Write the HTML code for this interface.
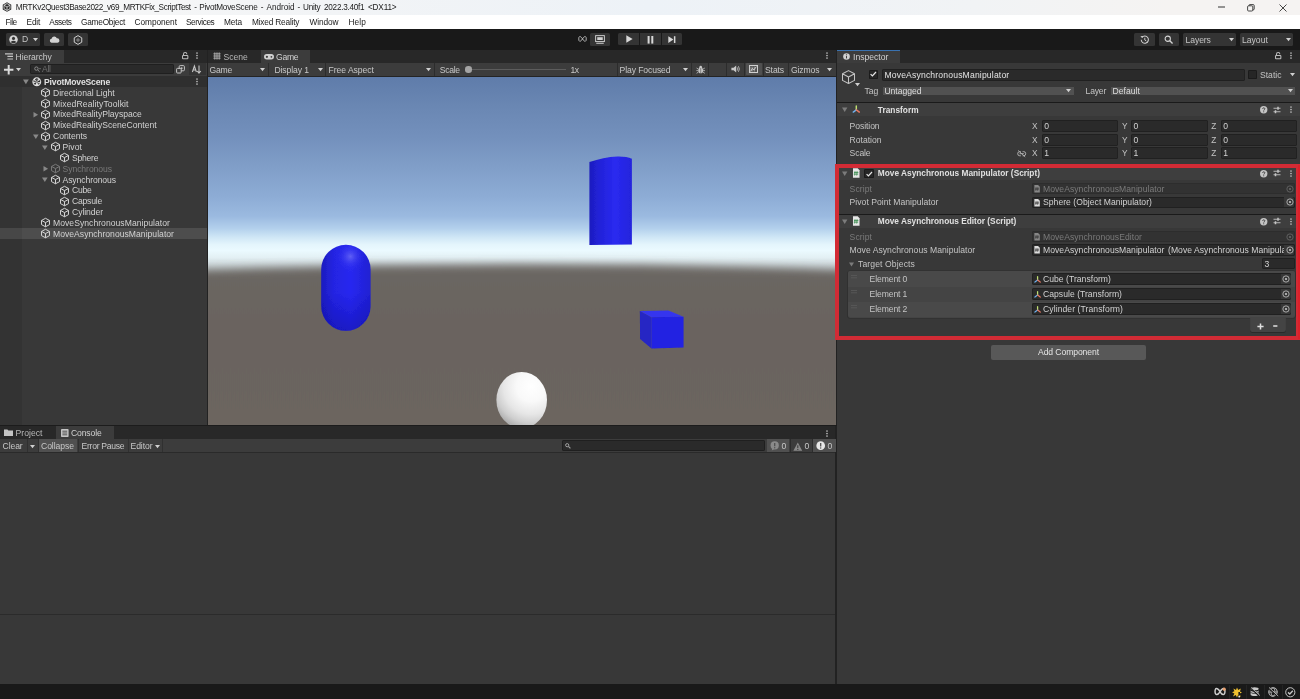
<!DOCTYPE html>
<html lang="en"><head><meta charset="utf-8"><title>Unity - PivotMoveScene</title>
<style>
html,body{margin:0;padding:0;background:#383838;}
body{width:1300px;height:699px;position:relative;overflow:hidden;font-family:"Liberation Sans",sans-serif;}
#root{position:absolute;left:0;top:0;width:1300px;height:699px;overflow:hidden;}
#root div,#root svg,#root span{position:absolute;box-sizing:content-box;}
#root svg{overflow:visible;}
.t{white-space:pre;line-height:12px;height:12px;}
#root{opacity:0.999;}
</style></head><body><div id="root">
<div style="left:0px;top:0px;width:1300px;height:14.8px;background:linear-gradient(90deg,#f8f8f8 0%,#f2f4f6 25%,#edf2f7 50%,#f1f3f5 75%,#f5f3f2 90%);"></div>
<div style="left:0px;top:14.8px;width:1300px;height:14.2px;background:#ffffff;"></div>
<svg style="left:1.8px;top:2.1px;" width="10" height="10" viewBox="0 0 16 16"><path d="M8 0.3 L14.8 4.2 V11.8 L8 15.7 L1.2 11.8 V4.2 Z" fill="#2b2b2b"/><path d="M8 2.5 L12.8 5.2 V10.8 L8 13.5 L3.2 10.8 V5.2 Z" fill="none" stroke="#e8e8e8" stroke-width="1.2"/><path d="M3.2 5.2 L8 8 L12.8 5.2 M8 8 V13.5" stroke="#e8e8e8" stroke-width="1.2" fill="none"/></svg>
<span id="t1" class="t" style="left:15.8px;top:1.70px;color:#1a1a1a;font-size:8.2px;letter-spacing:-0.393px;">MRTKv2Quest3Base2022_v69_MRTKFix_ScriptTest</span>
<span id="t2" class="t" style="left:194.2px;top:1.70px;color:#1a1a1a;font-size:8.2px;">-</span>
<span id="t3" class="t" style="left:199.2px;top:1.70px;color:#1a1a1a;font-size:8.2px;letter-spacing:-0.225px;">PivotMoveScene</span>
<span id="t4" class="t" style="left:260.8px;top:1.70px;color:#1a1a1a;font-size:8.2px;">-</span>
<span id="t5" class="t" style="left:266.5px;top:1.70px;color:#1a1a1a;font-size:8.2px;letter-spacing:-0.033px;">Android</span>
<span id="t6" class="t" style="left:297.6px;top:1.70px;color:#1a1a1a;font-size:8.2px;">-</span>
<span id="t7" class="t" style="left:303px;top:1.70px;color:#1a1a1a;font-size:8.2px;letter-spacing:-0.240px;">Unity</span>
<span id="t8" class="t" style="left:324px;top:1.70px;color:#1a1a1a;font-size:8.2px;letter-spacing:-0.261px;">2022.3.40f1</span>
<span id="t9" class="t" style="left:368px;top:1.70px;color:#1a1a1a;font-size:8.2px;letter-spacing:-0.173px;">&lt;DX11&gt;</span>
<span id="t10" class="t" style="left:5.5px;top:16.40px;color:#1a1a1a;font-size:8.3px;letter-spacing:-0.544px;">File</span>
<span id="t11" class="t" style="left:26.6px;top:16.40px;color:#1a1a1a;font-size:8.3px;letter-spacing:-0.224px;">Edit</span>
<span id="t12" class="t" style="left:49.3px;top:16.40px;color:#1a1a1a;font-size:8.3px;letter-spacing:-0.450px;">Assets</span>
<span id="t13" class="t" style="left:81px;top:16.40px;color:#1a1a1a;font-size:8.3px;letter-spacing:-0.240px;">GameObject</span>
<span id="t14" class="t" style="left:134.6px;top:16.40px;color:#1a1a1a;font-size:8.3px;letter-spacing:-0.067px;">Component</span>
<span id="t15" class="t" style="left:186px;top:16.40px;color:#1a1a1a;font-size:8.3px;letter-spacing:-0.438px;">Services</span>
<span id="t16" class="t" style="left:224px;top:16.40px;color:#1a1a1a;font-size:8.3px;letter-spacing:-0.113px;">Meta</span>
<span id="t17" class="t" style="left:252px;top:16.40px;color:#1a1a1a;font-size:8.3px;letter-spacing:-0.192px;">Mixed Reality</span>
<span id="t18" class="t" style="left:309.5px;top:16.40px;color:#1a1a1a;font-size:8.3px;letter-spacing:-0.083px;">Window</span>
<span id="t19" class="t" style="left:348.5px;top:16.40px;color:#1a1a1a;font-size:8.3px;letter-spacing:0.105px;">Help</span>
<svg style="left:1217.6px;top:3.2px;" width="8" height="8" viewBox="0 0 8 8"><path d="M0 4 H7" stroke="#333" stroke-width="1"/></svg>
<svg style="left:1247px;top:3.5px;" width="8" height="8" viewBox="0 0 8 8"><rect x="0.6" y="1.8" width="5.2" height="5.2" rx="1" fill="none" stroke="#333" stroke-width="0.9"/><path d="M2 1.8 V1.4 Q2 0.6 2.8 0.6 H6.2 Q7.2 0.6 7.2 1.6 V5 Q7.2 5.8 6.4 5.8 H5.8" fill="none" stroke="#333" stroke-width="0.9"/></svg>
<svg style="left:1279px;top:3.5px;" width="8" height="8" viewBox="0 0 8 8"><path d="M0.5 0.5 L7.5 7.5 M7.5 0.5 L0.5 7.5" stroke="#333" stroke-width="0.9"/></svg>
<div style="left:0px;top:29px;width:1300px;height:20.5px;background:#191919;"></div>
<div style="left:5.5px;top:33px;width:34.5px;height:12.6px;background:#343434;border-radius:1.5px;"></div>
<div style="left:44px;top:33px;width:20px;height:12.6px;background:#343434;border-radius:1.5px;"></div>
<div style="left:67.5px;top:33px;width:20.5px;height:13px;background:#343434;border-radius:1.5px;"></div>
<svg style="left:8.5px;top:35px;" width="9" height="9" viewBox="0 0 16 16"><circle cx="8" cy="8" r="7.6" fill="#d4d4d4"/><circle cx="8" cy="6" r="2.7" fill="#343434"/><path d="M2.8 12.4 Q8 7.6 13.2 12.4 Q8 16.8 2.8 12.4Z" fill="#343434"/></svg>
<span id="t20" class="t" style="left:22px;top:33.40px;color:#c4c4c4;font-size:8.6px;">D</span>
<svg style="left:32.5px;top:38.0px;" width="5" height="3.4" viewBox="0 0 5 3.4"><path d="M0 0 H5 L2.5 3.2 Z" fill="#d0d0d0"/></svg>
<svg style="left:49px;top:35.6px;" width="11" height="7.5" viewBox="0 0 20 13"><path d="M4.5 12 A3.6 3.6 0 0 1 4.6 4.9 A5 5 0 0 1 14.2 3.9 A4.1 4.1 0 0 1 15.6 12 Z" fill="#d4d4d4"/></svg>
<svg style="left:73px;top:34.7px;" width="10" height="10" viewBox="0 0 16 16"><path d="M8 1 L14 4.5 V11.5 L8 15 L2 11.5 V4.5 Z" fill="none" stroke="#d0d0d0" stroke-width="1.6" stroke-linejoin="round"/><circle cx="8" cy="8" r="1.9" fill="none" stroke="#d0d0d0" stroke-width="0.9"/></svg>
<svg style="left:577.6px;top:36.2px;" width="9" height="5.8" viewBox="0 0 20 12"><path d="M10 6 C7.5 1.5 5.5 0.8 3.6 0.8 C1 0.8 1 11.2 3.6 11.2 C5.5 11.2 7.5 10.5 10 6 C12.5 1.5 14.5 0.8 16.4 0.8 C19 0.8 19 11.2 16.4 11.2 C14.5 11.2 12.5 10.5 10 6" fill="none" stroke="#c8c8c8" stroke-width="1.9"/></svg>
<div style="left:590px;top:33px;width:20px;height:12.6px;background:#343434;border-radius:1.5px;"></div>
<svg style="left:595px;top:34.8px;" width="10" height="9" viewBox="0 0 16 14.4"><rect x="1" y="1" width="14" height="9.5" fill="none" stroke="#d0d0d0" stroke-width="1.5"/><rect x="3.6" y="3.5" width="8.8" height="4.5" fill="#d0d0d0"/><path d="M2 13.2 H14" stroke="#d0d0d0" stroke-width="1.6"/></svg>
<div style="left:618.4px;top:33px;width:20.8px;height:12.4px;background:#343434;border-radius:1.5px 0 0 1.5px;"></div>
<div style="left:640.2px;top:33px;width:20.8px;height:12.4px;background:#343434;"></div>
<div style="left:662px;top:33px;width:19.6px;height:12.4px;background:#343434;border-radius:0 1.5px 1.5px 0;"></div>
<svg style="left:625.5px;top:35.3px;" width="7" height="8" viewBox="0 0 7 8"><path d="M0.3 0.3 V7.7 L6.6 4 Z" fill="#d8d8d8"/></svg>
<svg style="left:647.3px;top:35.5px;" width="7" height="7.6" viewBox="0 0 7 7.6"><rect x="0.6" y="0" width="2" height="7.6" fill="#d8d8d8"/><rect x="4.3" y="0" width="2" height="7.6" fill="#d8d8d8"/></svg>
<svg style="left:668px;top:35.7px;" width="8" height="7.2" viewBox="0 0 8 7.2"><path d="M0.3 0.2 V7 L5.4 3.6 Z" fill="#d8d8d8"/><rect x="5.9" y="0.2" width="1.5" height="6.8" fill="#d8d8d8"/></svg>
<div style="left:1134.4px;top:33px;width:20.8px;height:12.6px;background:#343434;border-radius:1.5px;"></div>
<svg style="left:1140px;top:34.6px;" width="9.6" height="9.6" viewBox="0 0 16 16"><path d="M3.2 4.2 A6 6 0 1 1 2 8" fill="none" stroke="#d4d4d4" stroke-width="1.7"/><path d="M0.6 2 L3.8 5 L5.2 1.6 Z" fill="#d4d4d4"/><path d="M8 4.6 V8.4 L10.6 10" fill="none" stroke="#d4d4d4" stroke-width="1.5"/></svg>
<div style="left:1159px;top:33px;width:20.4px;height:12.6px;background:#343434;border-radius:1.5px;"></div>
<svg style="left:1164.4px;top:35px;" width="9.4" height="9.4" viewBox="0 0 16 16"><circle cx="6.4" cy="6.4" r="4.5" fill="none" stroke="#d4d4d4" stroke-width="1.8"/><path d="M9.8 9.8 L14.6 14.6" stroke="#d4d4d4" stroke-width="2.2"/></svg>
<div style="left:1183.4px;top:33px;width:52.6px;height:12.6px;background:#343434;border-radius:1.5px;"></div>
<span id="t21" class="t" style="left:1185.6px;top:33.60px;color:#c4c4c4;font-size:8.6px;letter-spacing:-0.100px;">Layers</span>
<svg style="left:1228.6px;top:38.1px;" width="5" height="3.4" viewBox="0 0 5 3.4"><path d="M0 0 H5 L2.5 3.2 Z" fill="#d0d0d0"/></svg>
<div style="left:1240px;top:33px;width:53px;height:12.6px;background:#343434;border-radius:1.5px;"></div>
<span id="t22" class="t" style="left:1242px;top:33.60px;color:#c4c4c4;font-size:8.6px;">Layout</span>
<svg style="left:1285.6px;top:38.1px;" width="5" height="3.4" viewBox="0 0 5 3.4"><path d="M0 0 H5 L2.5 3.2 Z" fill="#d0d0d0"/></svg>
<div style="left:0px;top:49.5px;width:1300px;height:634.5px;background:#222222;"></div>
<div style="left:0px;top:49.5px;width:206.6px;height:13px;background:#282828;"></div>
<div style="left:0px;top:49.5px;width:64px;height:13px;background:#3c3c3c;"></div>
<svg style="left:4.6px;top:53.3px;" width="8" height="7" viewBox="0 0 8 7"><path d="M0 0.8 H8 M2.4 3.4 H8 M2.4 6 H8" stroke="#c4c4c4" stroke-width="1.2"/></svg>
<span id="t23" class="t" style="left:15.5px;top:50.80px;color:#c8c8c8;font-size:8.6px;letter-spacing:-0.056px;">Hierarchy</span>
<svg style="left:181.8px;top:52.4px;" width="6.4" height="7.4" viewBox="0 0 6.4 7.4"><rect x="0.55" y="3.5" width="5.3" height="3.3" rx="0.6" fill="none" stroke="#bcbcbc" stroke-width="1.05"/><path d="M1.5 3.4 V2.3 A1.7 1.7 0 0 1 4.9 2.2" fill="none" stroke="#bcbcbc" stroke-width="1.05"/></svg>
<svg style="left:196.1px;top:52.4px;" width="2" height="7" viewBox="0 0 2 7"><circle cx="1" cy="1" r="0.85" fill="#bcbcbc"/><circle cx="1" cy="3.5" r="0.85" fill="#bcbcbc"/><circle cx="1" cy="6" r="0.85" fill="#bcbcbc"/></svg>
<div style="left:0px;top:62.5px;width:206.6px;height:13.5px;background:#3c3c3c;"></div>
<div style="left:0px;top:75.6px;width:206.6px;height:0.8px;background:#242424;"></div>
<svg style="left:4px;top:64.6px;" width="9.4" height="9.4" viewBox="0 0 9.4 9.4"><path d="M4.7 0 V9.4 M0 4.7 H9.4" stroke="#dcdcdc" stroke-width="2"/></svg>
<svg style="left:16px;top:67.8px;" width="5" height="3.4" viewBox="0 0 5 3.4"><path d="M0 0 H5 L2.5 3.2 Z" fill="#d0d0d0"/></svg>
<div style="left:29.5px;top:63.7px;width:144.5px;height:10.8px;background:#2a2a2a;border-radius:2px;box-shadow:inset 0 0 0 0.7px #1c1c1c;"></div>
<svg style="left:33.6px;top:66.2px;" width="7" height="6.4" viewBox="0 0 7 6.4"><circle cx="2.4" cy="2.6" r="1.7" fill="none" stroke="#8c8c8c" stroke-width="1"/><path d="M3.7 3.9 L5.6 5.8" stroke="#8c8c8c" stroke-width="1"/><path d="M5 2.2 H7 L6 3.4 Z" fill="#8c8c8c"/></svg>
<span id="t24" class="t" style="left:42px;top:63.40px;color:#6e6e6e;font-size:8.6px;letter-spacing:-0.333px;">All</span>
<svg style="left:175.6px;top:64.8px;" width="9" height="9" viewBox="0 0 9 9"><rect x="3.2" y="0.6" width="5.2" height="5.2" rx="1" fill="none" stroke="#c4c4c4" stroke-width="1"/><rect x="0.6" y="3.4" width="4.6" height="4.6" rx="0.8" fill="#3c3c3c" stroke="#c4c4c4" stroke-width="1"/><circle cx="5.6" cy="3.2" r="1" fill="#c4c4c4"/></svg>
<div style="left:189px;top:63px;width:17px;height:12.4px;background:#333333;"></div>
<svg style="left:191.6px;top:64.8px;" width="10" height="9" viewBox="0 0 10 9"><path d="M0.4 7 L2.4 1 L4.4 7 M1.2 5 H3.6" fill="none" stroke="#c4c4c4" stroke-width="1.1"/><path d="M7 0.6 V8 M5.2 6 L7 8.2 L8.8 6" fill="none" stroke="#c4c4c4" stroke-width="1.1"/></svg>
<div style="left:0px;top:76.4px;width:206.6px;height:348.2px;background:#383838;"></div>
<div style="left:0px;top:76.4px;width:22px;height:348.2px;background:#333333;"></div>
<div style="left:0px;top:76.4px;width:206.6px;height:10.8px;background:#2f2f2f;"></div>
<div style="left:0px;top:228.3px;width:206.6px;height:10.9px;background:#4d4d4d;"></div>
<div style="left:0px;top:228.3px;width:22px;height:10.9px;background:#474747;"></div>
<svg style="left:23.2px;top:79.39999999999999px;" width="5.8" height="5.8" viewBox="0 0 5.8 5.8"><path d="M0 0.5 H5.8 L2.9 5.3 Z" fill="#888888"/></svg>
<svg style="left:32px;top:77px;" width="9.6" height="9.6" viewBox="0 0 16 16"><circle cx="8" cy="8" r="7.4" fill="#e0e0e0"/><path d="M8 8 L8 1.6 L4.8 3.6 Z M8 8 L13.6 4.9 L13.5 8.8 Z M8 8 L2.5 11.2 L5.8 13 Z" fill="#2f2f2f"/><path d="M8 8 L8 1.6 L11 3.4 Z M8 8 L13.6 11.2 L10.4 13.1 Z M8 8 L2.4 4.9 L2.5 8.7 Z" fill="#2f2f2f" opacity="0.75"/></svg>
<span id="t25" class="t" style="left:44px;top:75.80px;color:#e0e0e0;font-size:8.6px;font-weight:bold;letter-spacing:-0.164px;">PivotMoveScene</span>
<svg style="left:195.7px;top:78.3px;" width="2" height="7" viewBox="0 0 2 7"><circle cx="1" cy="1" r="0.85" fill="#bcbcbc"/><circle cx="1" cy="3.5" r="0.85" fill="#bcbcbc"/><circle cx="1" cy="6" r="0.85" fill="#bcbcbc"/></svg>
<svg style="left:40.0px;top:87.19999999999999px;" width="11" height="11" viewBox="0 0 16 16"><path d="M8 1.9 L13.8 5 V11.1 L8 14.2 L2.2 11.1 V5 Z M2.2 5 L8 8.1 L13.8 5 M8 8.1 V14.2" fill="none" stroke="#d4d4d4" stroke-width="1.45" stroke-linejoin="round" opacity="1"/></svg>
<span id="t26" class="t" style="left:53.0px;top:86.70px;color:#d2d2d2;font-size:8.6px;">Directional Light</span>
<svg style="left:40.0px;top:98.04999999999998px;" width="11" height="11" viewBox="0 0 16 16"><path d="M8 1.9 L13.8 5 V11.1 L8 14.2 L2.2 11.1 V5 Z M2.2 5 L8 8.1 L13.8 5 M8 8.1 V14.2" fill="none" stroke="#d4d4d4" stroke-width="1.45" stroke-linejoin="round" opacity="1"/></svg>
<span id="t27" class="t" style="left:53.0px;top:97.55px;color:#d2d2d2;font-size:8.6px;letter-spacing:0.105px;">MixedRealityToolkit</span>
<svg style="left:40.0px;top:108.89999999999999px;" width="11" height="11" viewBox="0 0 16 16"><path d="M8 1.9 L13.8 5 V11.1 L8 14.2 L2.2 11.1 V5 Z M2.2 5 L8 8.1 L13.8 5 M8 8.1 V14.2" fill="none" stroke="#d4d4d4" stroke-width="1.45" stroke-linejoin="round" opacity="1"/></svg>
<span id="t28" class="t" style="left:53.0px;top:108.40px;color:#d2d2d2;font-size:8.6px;">MixedRealityPlayspace</span>
<svg style="left:33.2px;top:111.5px;" width="5.6" height="5.6" viewBox="0 0 5.6 5.6"><path d="M0.5 0 V5.6 L5.1 2.8 Z" fill="#888888"/></svg>
<svg style="left:40.0px;top:119.74999999999999px;" width="11" height="11" viewBox="0 0 16 16"><path d="M8 1.9 L13.8 5 V11.1 L8 14.2 L2.2 11.1 V5 Z M2.2 5 L8 8.1 L13.8 5 M8 8.1 V14.2" fill="none" stroke="#d4d4d4" stroke-width="1.45" stroke-linejoin="round" opacity="1"/></svg>
<span id="t29" class="t" style="left:53.0px;top:119.25px;color:#d2d2d2;font-size:8.6px;">MixedRealitySceneContent</span>
<svg style="left:40.0px;top:130.6px;" width="11" height="11" viewBox="0 0 16 16"><path d="M8 1.9 L13.8 5 V11.1 L8 14.2 L2.2 11.1 V5 Z M2.2 5 L8 8.1 L13.8 5 M8 8.1 V14.2" fill="none" stroke="#d4d4d4" stroke-width="1.45" stroke-linejoin="round" opacity="1"/></svg>
<span id="t30" class="t" style="left:53.0px;top:130.10px;color:#d2d2d2;font-size:8.6px;letter-spacing:-0.051px;">Contents</span>
<svg style="left:32.7px;top:133.7px;" width="5.6" height="5.6" viewBox="0 0 5.6 5.6"><path d="M0 0.5 H5.6 L2.8 5.1 Z" fill="#888888"/></svg>
<svg style="left:49.5px;top:141.45px;" width="11" height="11" viewBox="0 0 16 16"><path d="M8 1.9 L13.8 5 V11.1 L8 14.2 L2.2 11.1 V5 Z M2.2 5 L8 8.1 L13.8 5 M8 8.1 V14.2" fill="none" stroke="#d4d4d4" stroke-width="1.45" stroke-linejoin="round" opacity="1"/></svg>
<span id="t31" class="t" style="left:62.5px;top:140.95px;color:#d2d2d2;font-size:8.6px;letter-spacing:0.078px;">Pivot</span>
<svg style="left:42.2px;top:144.54999999999998px;" width="5.6" height="5.6" viewBox="0 0 5.6 5.6"><path d="M0 0.5 H5.6 L2.8 5.1 Z" fill="#888888"/></svg>
<svg style="left:59.0px;top:152.29999999999998px;" width="11" height="11" viewBox="0 0 16 16"><path d="M8 1.9 L13.8 5 V11.1 L8 14.2 L2.2 11.1 V5 Z M2.2 5 L8 8.1 L13.8 5 M8 8.1 V14.2" fill="none" stroke="#d4d4d4" stroke-width="1.45" stroke-linejoin="round" opacity="1"/></svg>
<span id="t32" class="t" style="left:72.0px;top:151.80px;color:#d2d2d2;font-size:8.6px;letter-spacing:-0.250px;">Sphere</span>
<svg style="left:49.5px;top:163.15px;" width="11" height="11" viewBox="0 0 16 16"><path d="M8 1.9 L13.8 5 V11.1 L8 14.2 L2.2 11.1 V5 Z M2.2 5 L8 8.1 L13.8 5 M8 8.1 V14.2" fill="none" stroke="#787878" stroke-width="1.45" stroke-linejoin="round" opacity="1"/></svg>
<span id="t33" class="t" style="left:62.5px;top:162.65px;color:#787878;font-size:8.6px;letter-spacing:-0.061px;">Synchronous</span>
<svg style="left:42.7px;top:165.75px;" width="5.6" height="5.6" viewBox="0 0 5.6 5.6"><path d="M0.5 0 V5.6 L5.1 2.8 Z" fill="#888888"/></svg>
<svg style="left:49.5px;top:173.99999999999997px;" width="11" height="11" viewBox="0 0 16 16"><path d="M8 1.9 L13.8 5 V11.1 L8 14.2 L2.2 11.1 V5 Z M2.2 5 L8 8.1 L13.8 5 M8 8.1 V14.2" fill="none" stroke="#d4d4d4" stroke-width="1.45" stroke-linejoin="round" opacity="1"/></svg>
<span id="t34" class="t" style="left:62.5px;top:173.50px;color:#d2d2d2;font-size:8.6px;letter-spacing:-0.081px;">Asynchronous</span>
<svg style="left:42.2px;top:177.09999999999997px;" width="5.6" height="5.6" viewBox="0 0 5.6 5.6"><path d="M0 0.5 H5.6 L2.8 5.1 Z" fill="#888888"/></svg>
<svg style="left:59.0px;top:184.85px;" width="11" height="11" viewBox="0 0 16 16"><path d="M8 1.9 L13.8 5 V11.1 L8 14.2 L2.2 11.1 V5 Z M2.2 5 L8 8.1 L13.8 5 M8 8.1 V14.2" fill="none" stroke="#d4d4d4" stroke-width="1.45" stroke-linejoin="round" opacity="1"/></svg>
<span id="t35" class="t" style="left:72.0px;top:184.35px;color:#d2d2d2;font-size:8.6px;letter-spacing:-0.250px;">Cube</span>
<svg style="left:59.0px;top:195.7px;" width="11" height="11" viewBox="0 0 16 16"><path d="M8 1.9 L13.8 5 V11.1 L8 14.2 L2.2 11.1 V5 Z M2.2 5 L8 8.1 L13.8 5 M8 8.1 V14.2" fill="none" stroke="#d4d4d4" stroke-width="1.45" stroke-linejoin="round" opacity="1"/></svg>
<span id="t36" class="t" style="left:72.0px;top:195.20px;color:#d2d2d2;font-size:8.6px;letter-spacing:-0.214px;">Capsule</span>
<svg style="left:59.0px;top:206.54999999999998px;" width="11" height="11" viewBox="0 0 16 16"><path d="M8 1.9 L13.8 5 V11.1 L8 14.2 L2.2 11.1 V5 Z M2.2 5 L8 8.1 L13.8 5 M8 8.1 V14.2" fill="none" stroke="#d4d4d4" stroke-width="1.45" stroke-linejoin="round" opacity="1"/></svg>
<span id="t37" class="t" style="left:72.0px;top:206.05px;color:#d2d2d2;font-size:8.6px;letter-spacing:-0.062px;">Cylinder</span>
<svg style="left:40.0px;top:217.39999999999998px;" width="11" height="11" viewBox="0 0 16 16"><path d="M8 1.9 L13.8 5 V11.1 L8 14.2 L2.2 11.1 V5 Z M2.2 5 L8 8.1 L13.8 5 M8 8.1 V14.2" fill="none" stroke="#d4d4d4" stroke-width="1.45" stroke-linejoin="round" opacity="1"/></svg>
<span id="t38" class="t" style="left:53.0px;top:216.90px;color:#d2d2d2;font-size:8.6px;letter-spacing:0.035px;">MoveSynchronousManipulator</span>
<svg style="left:40.0px;top:228.24999999999997px;" width="11" height="11" viewBox="0 0 16 16"><path d="M8 1.9 L13.8 5 V11.1 L8 14.2 L2.2 11.1 V5 Z M2.2 5 L8 8.1 L13.8 5 M8 8.1 V14.2" fill="none" stroke="#d4d4d4" stroke-width="1.45" stroke-linejoin="round" opacity="1"/></svg>
<span id="t39" class="t" style="left:53.0px;top:227.75px;color:#d2d2d2;font-size:8.6px;letter-spacing:0.023px;">MoveAsynchronousManipulator</span>
<div style="left:207.6px;top:49.5px;width:628.2px;height:13px;background:#282828;"></div>
<div style="left:261px;top:49.5px;width:48.6px;height:13px;background:#3c3c3c;"></div>
<svg style="left:212.6px;top:52.4px;" width="8" height="8" viewBox="0 0 8 8"><path d="M0.4 1.8 H7.6 M0.4 4 H7.6 M0.4 6.2 H7.6 M1.8 0.4 V7.6 M4 0.4 V7.6 M6.2 0.4 V7.6" stroke="#b0b0b0" stroke-width="0.9"/></svg>
<span id="t40" class="t" style="left:223.6px;top:50.80px;color:#b8b8b8;font-size:8.6px;letter-spacing:-0.075px;">Scene</span>
<svg style="left:264.4px;top:53.8px;" width="10" height="5.6" viewBox="0 0 10 5.6"><rect x="0" y="0" width="10" height="5.6" rx="2.8" fill="#d0d0d0"/><circle cx="2.9" cy="2.8" r="1.1" fill="#3c3c3c"/><circle cx="7.4" cy="2.8" r="0.9" fill="#3c3c3c"/></svg>
<span id="t41" class="t" style="left:276px;top:50.80px;color:#d2d2d2;font-size:8.6px;letter-spacing:-0.252px;">Game</span>
<svg style="left:825.8px;top:52.4px;" width="2" height="7" viewBox="0 0 2 7"><circle cx="1" cy="1" r="0.85" fill="#bcbcbc"/><circle cx="1" cy="3.5" r="0.85" fill="#bcbcbc"/><circle cx="1" cy="6" r="0.85" fill="#bcbcbc"/></svg>
<div style="left:207.6px;top:62.5px;width:628.2px;height:13.5px;background:#3c3c3c;"></div>
<div style="left:207.6px;top:75.6px;width:628.2px;height:0.9px;background:#242424;"></div>
<div style="left:268.4px;top:62.5px;width:0.8px;height:13.2px;background:#2c2c2c;"></div>
<div style="left:325.4px;top:62.5px;width:0.8px;height:13.2px;background:#2c2c2c;"></div>
<div style="left:433.6px;top:62.5px;width:0.8px;height:13.2px;background:#2c2c2c;"></div>
<div style="left:617.4px;top:62.5px;width:0.8px;height:13.2px;background:#2c2c2c;"></div>
<div style="left:690.6px;top:62.5px;width:0.8px;height:13.2px;background:#2c2c2c;"></div>
<div style="left:708px;top:62.5px;width:0.8px;height:13.2px;background:#2c2c2c;"></div>
<div style="left:726px;top:62.5px;width:0.8px;height:13.2px;background:#2c2c2c;"></div>
<div style="left:744px;top:62.5px;width:0.8px;height:13.2px;background:#2c2c2c;"></div>
<div style="left:762.6px;top:62.5px;width:0.8px;height:13.2px;background:#2c2c2c;"></div>
<div style="left:787.6px;top:62.5px;width:0.8px;height:13.2px;background:#2c2c2c;"></div>
<span id="t42" class="t" style="left:209.6px;top:63.60px;color:#c8c8c8;font-size:8.6px;letter-spacing:-0.252px;">Game</span>
<svg style="left:260px;top:67.9px;" width="5" height="3.4" viewBox="0 0 5 3.4"><path d="M0 0 H5 L2.5 3.2 Z" fill="#d0d0d0"/></svg>
<span id="t43" class="t" style="left:274.4px;top:63.60px;color:#c8c8c8;font-size:8.6px;letter-spacing:-0.084px;">Display 1</span>
<svg style="left:318px;top:67.9px;" width="5" height="3.4" viewBox="0 0 5 3.4"><path d="M0 0 H5 L2.5 3.2 Z" fill="#d0d0d0"/></svg>
<span id="t44" class="t" style="left:328.6px;top:63.60px;color:#c8c8c8;font-size:8.6px;letter-spacing:-0.055px;">Free Aspect</span>
<svg style="left:426px;top:67.9px;" width="5" height="3.4" viewBox="0 0 5 3.4"><path d="M0 0 H5 L2.5 3.2 Z" fill="#d0d0d0"/></svg>
<span id="t45" class="t" style="left:439.7px;top:63.60px;color:#c8c8c8;font-size:8.6px;letter-spacing:-0.280px;">Scale</span>
<div style="left:468px;top:68.8px;width:98px;height:1.2px;background:#5c5c5c;"></div>
<div style="left:465.4px;top:66.2px;width:6.4px;height:6.4px;background:#a4a4a4;border-radius:50%;"></div>
<span id="t46" class="t" style="left:570.6px;top:63.60px;color:#c8c8c8;font-size:8.6px;letter-spacing:-0.539px;">1x</span>
<span id="t47" class="t" style="left:619.5px;top:63.60px;color:#c8c8c8;font-size:8.6px;letter-spacing:-0.090px;">Play Focused</span>
<svg style="left:683px;top:67.9px;" width="5" height="3.4" viewBox="0 0 5 3.4"><path d="M0 0 H5 L2.5 3.2 Z" fill="#d0d0d0"/></svg>
<svg style="left:695.6px;top:64.6px;" width="9.4" height="9.6" viewBox="0 0 16 16"><ellipse cx="8" cy="9" rx="4" ry="5" fill="#c8c8c8"/><circle cx="8" cy="3.6" r="2.3" fill="#c8c8c8"/><path d="M1 5 L4.4 7 M15 5 L11.6 7 M0.6 9.4 H4 M15.4 9.4 H12 M1 14 L4.4 11.6 M15 14 L11.6 11.6" stroke="#c8c8c8" stroke-width="1.3"/><path d="M8 5 V14" stroke="#3c3c3c" stroke-width="0.9"/></svg>
<svg style="left:731.4px;top:65.2px;" width="8.6" height="8" viewBox="0 0 8.6 8"><path d="M0.4 2.8 H2.6 L5.2 0.4 V7.6 L2.6 5.2 H0.4 Z" fill="#c8c8c8"/><path d="M6.3 2.4 Q7.4 4 6.3 5.6 M7.4 1.2 Q9.4 4 7.4 6.8" fill="none" stroke="#c8c8c8" stroke-width="0.8"/></svg>
<div style="left:745.6px;top:63.4px;width:16px;height:11.4px;background:#505050;border-radius:1px;"></div>
<svg style="left:749.4px;top:65.2px;" width="9" height="8" viewBox="0 0 9 8"><rect x="0.5" y="0.5" width="8" height="7" fill="none" stroke="#d0d0d0" stroke-width="1"/><path d="M1.6 6.4 L3.4 3.4 L4.8 5 L7.4 1.6" fill="none" stroke="#d0d0d0" stroke-width="1"/><path d="M2 1.6 V6.6 M3.8 1.6 V6.6 M5.6 1.6 V6.6" stroke="#d0d0d0" stroke-width="0.5"/></svg>
<span id="t48" class="t" style="left:765px;top:63.60px;color:#c8c8c8;font-size:8.6px;letter-spacing:-0.120px;">Stats</span>
<span id="t49" class="t" style="left:791px;top:63.60px;color:#c8c8c8;font-size:8.6px;letter-spacing:-0.123px;">Gizmos</span>
<svg style="left:827px;top:67.9px;" width="5" height="3.4" viewBox="0 0 5 3.4"><path d="M0 0 H5 L2.5 3.2 Z" fill="#d0d0d0"/></svg>
<svg style="left:207.6px;top:76.5px;overflow:hidden" width="628.2" height="348.2" viewBox="207.6 76.5 628.2 348.2">
<defs>
<linearGradient id="sky" x1="0" y1="76.5" x2="0" y2="276.5" gradientUnits="userSpaceOnUse">
<stop offset="0.0" stop-color="#5f7caa"/><stop offset="0.1475" stop-color="#6a87b3"/><stop offset="0.2975" stop-color="#7390bc"/><stop offset="0.4475" stop-color="#809ec8"/><stop offset="0.5975" stop-color="#8dacd5"/><stop offset="0.6975" stop-color="#9bbae0"/><stop offset="0.7575" stop-color="#b3d0ec"/><stop offset="0.8025" stop-color="#d0e7f6"/><stop offset="0.8375" stop-color="#e4f5fc"/><stop offset="0.8675" stop-color="#ebfaff"/><stop offset="0.9025" stop-color="#e3f0f4"/><stop offset="0.9425" stop-color="#ccd6d9"/><stop offset="1.0" stop-color="#b4bcbe"/></linearGradient>
<linearGradient id="gnd" x1="0" y1="255" x2="0" y2="425" gradientUnits="userSpaceOnUse">
<stop offset="0" stop-color="#6f6b68"/><stop offset="0.12" stop-color="#6b6662"/><stop offset="0.4" stop-color="#6a645f"/><stop offset="1" stop-color="#6c655f"/></linearGradient>
<linearGradient id="cyl" x1="589" y1="0" x2="631.5" y2="0" gradientUnits="userSpaceOnUse">
<stop offset="0" stop-color="#1d1dbe"/><stop offset="0.2" stop-color="#2121d6"/><stop offset="0.6" stop-color="#2a2af0"/><stop offset="1" stop-color="#2424dc"/></linearGradient>
<linearGradient id="caph" x1="320.8" y1="0" x2="370.2" y2="0" gradientUnits="userSpaceOnUse">
<stop offset="0" stop-color="#1c1cbe"/><stop offset="0.25" stop-color="#2424e2"/><stop offset="0.6" stop-color="#2828f0"/><stop offset="1" stop-color="#2020d2"/></linearGradient>
<radialGradient id="capg" cx="350" cy="256" r="16" gradientUnits="userSpaceOnUse">
<stop offset="0" stop-color="#7878f6" stop-opacity="0.7"/><stop offset="0.5" stop-color="#4a4af4" stop-opacity="0.3"/><stop offset="1" stop-color="#2828f0" stop-opacity="0"/></radialGradient>
<linearGradient id="capv" x1="0" y1="244" x2="0" y2="331" gradientUnits="userSpaceOnUse">
<stop offset="0.55" stop-color="#0000a0" stop-opacity="0"/><stop offset="1" stop-color="#0a0a90" stop-opacity="0.45"/></linearGradient>
<radialGradient id="sph" cx="531" cy="386" r="43" gradientUnits="userSpaceOnUse">
<stop offset="0" stop-color="#ffffff"/><stop offset="0.35" stop-color="#f9f9f9"/><stop offset="0.65" stop-color="#e6e6e6"/><stop offset="0.85" stop-color="#cecece"/><stop offset="1" stop-color="#b0b0b0"/></radialGradient>
<filter id="b1" x="-10%" y="-10%" width="120%" height="120%"><feGaussianBlur stdDeviation="0.5"/></filter>
<filter id="b3" x="-5%" y="-10%" width="110%" height="120%"><feGaussianBlur stdDeviation="0 4.2"/></filter>
</defs>
<rect x="207" y="76.5" width="630" height="210" fill="url(#sky)"/>
<path d="M180 270.6 Q522 257.4 864 270.6 V440 H180 Z" fill="url(#gnd)" filter="url(#b3)"/>
<g filter="url(#b1)">
<path d="M589 161.6 Q603 156.4 617 155.9 Q626 155.7 631.5 158.2 V244.1 L589 244.5 Z" fill="url(#cyl)"/>
<rect x="320.8" y="244.3" width="49.4" height="86" rx="24.7" fill="url(#caph)"/>
<rect x="320.8" y="244.3" width="49.4" height="86" rx="24.7" fill="url(#capv)"/>
<rect x="320.8" y="244.3" width="49.4" height="86" rx="24.7" fill="url(#capg)"/>
<path d="M639.5 310.5 L668 309.9 L683.2 316.2 L650.9 316.7 Z" fill="#3636ee"/>
<path d="M639.5 310.5 L650.9 316.7 L651.1 347.9 L639.7 338.5 Z" fill="#2626c4"/>
<path d="M650.9 316.7 L683.2 316.2 L683.2 347.1 L651.1 347.9 Z" fill="#2020e2"/>
<ellipse cx="521.3" cy="399.6" rx="25.3" ry="28.2" fill="url(#sph)"/>
</g>
</svg>
<div style="left:0px;top:424.6px;width:837px;height:1.2px;background:#1c1c1c;"></div>
<div style="left:0px;top:425.7px;width:835.2px;height:13.3px;background:#282828;"></div>
<div style="left:55.6px;top:426px;width:58.4px;height:13px;background:#3c3c3c;"></div>
<svg style="left:4.4px;top:429.3px;" width="9" height="7" viewBox="0 0 9 7"><path d="M0 0.4 H3.4 L4.4 1.5 H9 V7 H0 Z" fill="#c4c4c4"/></svg>
<span id="t50" class="t" style="left:15.6px;top:427.40px;color:#b8b8b8;font-size:8.6px;">Project</span>
<svg style="left:60.6px;top:428.6px;" width="7.6" height="8" viewBox="0 0 7.6 8"><rect x="0" y="0" width="7.6" height="8" rx="0.8" fill="#c4c4c4"/><path d="M1.4 2.2 H6.2 M1.4 4 H6.2 M1.4 5.8 H6.2" stroke="#3c3c3c" stroke-width="0.8"/></svg>
<span id="t51" class="t" style="left:71px;top:427.40px;color:#d2d2d2;font-size:8.6px;letter-spacing:-0.143px;">Console</span>
<svg style="left:825.6px;top:429.5px;" width="2" height="7" viewBox="0 0 2 7"><circle cx="1" cy="1" r="0.85" fill="#bcbcbc"/><circle cx="1" cy="3.5" r="0.85" fill="#bcbcbc"/><circle cx="1" cy="6" r="0.85" fill="#bcbcbc"/></svg>
<div style="left:0px;top:439px;width:835.2px;height:13.4px;background:#3c3c3c;"></div>
<div style="left:0px;top:452.2px;width:835.2px;height:0.8px;background:#2a2a2a;"></div>
<div style="left:39px;top:439.4px;width:38.4px;height:12.6px;background:#505050;"></div>
<div style="left:27px;top:439px;width:0.8px;height:13.2px;background:#303030;"></div>
<div style="left:38.2px;top:439px;width:0.8px;height:13.2px;background:#303030;"></div>
<div style="left:78px;top:439px;width:0.8px;height:13.2px;background:#303030;"></div>
<div style="left:127.6px;top:439px;width:0.8px;height:13.2px;background:#303030;"></div>
<div style="left:162px;top:439px;width:0.8px;height:13.2px;background:#303030;"></div>
<span id="t52" class="t" style="left:2.6px;top:440.40px;color:#c8c8c8;font-size:8.6px;letter-spacing:-0.120px;">Clear</span>
<svg style="left:30.4px;top:444.7px;" width="5" height="3.4" viewBox="0 0 5 3.4"><path d="M0 0 H5 L2.5 3.2 Z" fill="#d0d0d0"/></svg>
<span id="t53" class="t" style="left:41px;top:440.40px;color:#c8c8c8;font-size:8.6px;letter-spacing:-0.057px;">Collapse</span>
<span id="t54" class="t" style="left:81.5px;top:440.40px;color:#c8c8c8;font-size:8.6px;letter-spacing:-0.273px;">Error Pause</span>
<span id="t55" class="t" style="left:130.5px;top:440.40px;color:#c8c8c8;font-size:8.6px;letter-spacing:-0.076px;">Editor</span>
<svg style="left:154.6px;top:444.7px;" width="5" height="3.4" viewBox="0 0 5 3.4"><path d="M0 0 H5 L2.5 3.2 Z" fill="#d0d0d0"/></svg>
<div style="left:561.5px;top:440.4px;width:203px;height:10.6px;background:#2a2a2a;border-radius:2px;box-shadow:inset 0 0 0 0.7px #1c1c1c;"></div>
<svg style="left:564.6px;top:443px;" width="6" height="6" viewBox="0 0 6 6"><circle cx="2.2" cy="2.2" r="1.6" fill="none" stroke="#a0a0a0" stroke-width="1"/><path d="M3.4 3.4 L5.4 5.4" stroke="#a0a0a0" stroke-width="1.1"/></svg>
<div style="left:766.6px;top:439.4px;width:22.6px;height:12.6px;background:#505050;"></div>
<div style="left:812.6px;top:439.4px;width:23.4px;height:12.6px;background:#505050;"></div>
<div style="left:789.6px;top:439px;width:0.8px;height:13.2px;background:#2c2c2c;"></div>
<div style="left:812px;top:439px;width:0.8px;height:13.2px;background:#2c2c2c;"></div>
<svg style="left:769.6px;top:441.4px;" width="9.4" height="9.4" viewBox="0 0 16 16"><circle cx="8" cy="7.6" r="7" fill="#8a8a8a"/><path d="M8 3.4 V9" stroke="#505050" stroke-width="2.2"/><circle cx="8" cy="11.6" r="1.2" fill="#505050"/><path d="M4 13 L3 16 L7 14 Z" fill="#8a8a8a"/></svg>
<span id="t56" class="t" style="left:781.6px;top:440.40px;color:#c8c8c8;font-size:8.6px;">0</span>
<svg style="left:793px;top:441.6px;" width="9.6" height="9" viewBox="0 0 16 15"><path d="M8 0.8 L15.4 14.6 H0.6 Z" fill="#8a8a8a"/><path d="M8 5.4 V10.2" stroke="#3c3c3c" stroke-width="1.8"/><circle cx="8" cy="12.4" r="1.1" fill="#3c3c3c"/></svg>
<span id="t57" class="t" style="left:804.6px;top:440.40px;color:#c8c8c8;font-size:8.6px;">0</span>
<svg style="left:815.6px;top:441.4px;" width="9.4" height="9.4" viewBox="0 0 16 16"><circle cx="8" cy="8" r="7.4" fill="#e8e8e8"/><path d="M8 3.6 V9.2" stroke="#505050" stroke-width="2.2"/><circle cx="8" cy="12" r="1.3" fill="#505050"/></svg>
<span id="t58" class="t" style="left:827.6px;top:440.40px;color:#c8c8c8;font-size:8.6px;">0</span>
<div style="left:0px;top:453px;width:835.2px;height:231px;background:#383838;"></div>
<div style="left:0px;top:613.8px;width:835.2px;height:0.9px;background:#2b2b2b;"></div>
<div style="left:837.4px;top:49.5px;width:462.6px;height:13px;background:#282828;"></div>
<div style="left:837.4px;top:49.5px;width:62.4px;height:13px;background:#3c3c3c;"></div>
<div style="left:837.4px;top:49.5px;width:62.4px;height:1.3px;background:#3a72b0;"></div>
<svg style="left:843.4px;top:53px;" width="7" height="7" viewBox="0 0 16 16"><circle cx="8" cy="8" r="7.6" fill="#d0d0d0"/><path d="M8 7 V12.4" stroke="#3c3c3c" stroke-width="2.4"/><circle cx="8" cy="4" r="1.4" fill="#3c3c3c"/></svg>
<span id="t59" class="t" style="left:853px;top:50.80px;color:#d2d2d2;font-size:8.6px;letter-spacing:0.005px;">Inspector</span>
<svg style="left:1274.8px;top:52.4px;" width="6.4" height="7.4" viewBox="0 0 6.4 7.4"><rect x="0.55" y="3.5" width="5.3" height="3.3" rx="0.6" fill="none" stroke="#bcbcbc" stroke-width="1.05"/><path d="M1.5 3.4 V2.3 A1.7 1.7 0 0 1 4.9 2.2" fill="none" stroke="#bcbcbc" stroke-width="1.05"/></svg>
<svg style="left:1289.6px;top:52.4px;" width="2" height="7" viewBox="0 0 2 7"><circle cx="1" cy="1" r="0.85" fill="#bcbcbc"/><circle cx="1" cy="3.5" r="0.85" fill="#bcbcbc"/><circle cx="1" cy="6" r="0.85" fill="#bcbcbc"/></svg>
<div style="left:837.4px;top:62.5px;width:462.6px;height:621.5px;background:#383838;"></div>
<svg style="left:841.1px;top:68.5px;" width="15" height="16" viewBox="0 0 16 16"><path d="M8 1.2 L14.4 4.6 V11.6 L8 15 L1.6 11.6 V4.6 Z M1.6 4.6 L8 8 L14.4 4.6 M8 8 V15" fill="none" stroke="#c4c4c4" stroke-width="1.1" stroke-linejoin="round"/></svg>
<svg style="left:854.6px;top:83.1px;" width="5" height="3.4" viewBox="0 0 5 3.4"><path d="M0 0 H5 L2.5 3.2 Z" fill="#d0d0d0"/></svg>
<div style="left:869px;top:69.6px;width:9.4px;height:9.4px;background:#262626;border-radius:1.5px;box-shadow:inset 0 0 0 0.7px #181818;"></div>
<svg style="left:870.4px;top:71.39999999999999px;" width="6.6000000000000005" height="6.0" viewBox="0 0 6.6 5.6"><path d="M0.6 3 L2.4 4.8 L6 0.8" fill="none" stroke="#e6e6e6" stroke-width="1.2"/></svg>
<div style="left:882.4px;top:68.8px;width:362.6px;height:11.8px;background:#2a2a2a;border-radius:2px;box-shadow:inset 0 0 0 0.7px #1e1e1e;"></div>
<span id="t60" class="t" style="left:884.4px;top:69.00px;color:#e4e4e4;font-size:8.6px;letter-spacing:0.171px;">MoveAsynchronousManipulator</span>
<div style="left:1248px;top:69.6px;width:9.4px;height:9.4px;background:#262626;border-radius:1.5px;box-shadow:inset 0 0 0 0.7px #181818;"></div>
<span id="t61" class="t" style="left:1260px;top:69.00px;color:#c4c4c4;font-size:8.6px;">Static</span>
<svg style="left:1290.4px;top:73.3px;" width="5" height="3.4" viewBox="0 0 5 3.4"><path d="M0 0 H5 L2.5 3.2 Z" fill="#d0d0d0"/></svg>
<span id="t62" class="t" style="left:864.4px;top:85.00px;color:#c4c4c4;font-size:8.6px;letter-spacing:0.067px;">Tag</span>
<div style="left:882.4px;top:85.8px;width:192.4px;height:10.2px;background:#515151;border-radius:2px;box-shadow:inset 0 0 0 0.7px #303030;"></div>
<span id="t63" class="t" style="left:884.4px;top:84.80px;color:#dcdcdc;font-size:8.6px;letter-spacing:-0.010px;">Untagged</span>
<svg style="left:1066.4px;top:89.4px;" width="5" height="3.4" viewBox="0 0 5 3.4"><path d="M0 0 H5 L2.5 3.2 Z" fill="#d0d0d0"/></svg>
<span id="t64" class="t" style="left:1085.6px;top:85.00px;color:#c4c4c4;font-size:8.6px;letter-spacing:-0.200px;">Layer</span>
<div style="left:1110px;top:85.8px;width:186.4px;height:10.2px;background:#515151;border-radius:2px;box-shadow:inset 0 0 0 0.7px #303030;"></div>
<span id="t65" class="t" style="left:1112.4px;top:84.80px;color:#dcdcdc;font-size:8.6px;letter-spacing:0.052px;">Default</span>
<svg style="left:1288px;top:89.4px;" width="5" height="3.4" viewBox="0 0 5 3.4"><path d="M0 0 H5 L2.5 3.2 Z" fill="#d0d0d0"/></svg>
<div style="left:837.4px;top:102px;width:462.6px;height:0.9px;background:#1a1a1a;"></div>
<div style="left:837.4px;top:102.9px;width:462.6px;height:13.2px;background:#3e3e3e;"></div>
<svg style="left:842px;top:107.39999999999999px;" width="5.4" height="5.4" viewBox="0 0 5.4 5.4"><path d="M0 0.5 H5.4 L2.7 4.9 Z" fill="#7c7c7c"/></svg>
<svg style="left:850.6px;top:104.1px;" width="10.6" height="10.6" viewBox="0 0 16 16"><path d="M8 8.6 V3" stroke="#bfe070" stroke-width="2.2" stroke-linecap="round" fill="none"/><path d="M8 8.8 L3.4 12.2" stroke="#6fb0ea" stroke-width="2.2" stroke-linecap="round"/><path d="M8 8.8 L12.6 12.2" stroke="#e87860" stroke-width="2.2" stroke-linecap="round"/></svg>
<span id="t66" class="t" style="left:877.8px;top:103.60px;color:#e0e0e0;font-size:8.3px;font-weight:bold;letter-spacing:0.022px;">Transform</span>
<svg style="left:1259.8999999999999px;top:105.89999999999999px;" width="7.4" height="7.4" viewBox="0 0 16 16"><circle cx="8" cy="8" r="8" fill="#c4c4c4"/><path d="M5.6 6.2 C5.6 3.2 10.6 3.2 10.6 6.2 C10.6 8 8 8 8 10" fill="none" stroke="#3e3e3e" stroke-width="2"/><circle cx="8" cy="12.6" r="1.2" fill="#3e3e3e"/></svg>
<svg style="left:1273.4px;top:105.6px;" width="8" height="8" viewBox="0 0 16 16"><path d="M1 4.5 H15 M1 11.5 H15" stroke="#c4c4c4" stroke-width="1.8"/><rect x="8.5" y="1.5" width="3" height="6" fill="#c4c4c4"/><rect x="3.5" y="8.5" width="3" height="6" fill="#c4c4c4"/></svg>
<svg style="left:1289.8px;top:106.1px;" width="2" height="7" viewBox="0 0 2 7"><circle cx="1" cy="1" r="0.85" fill="#bcbcbc"/><circle cx="1" cy="3.5" r="0.85" fill="#bcbcbc"/><circle cx="1" cy="6" r="0.85" fill="#bcbcbc"/></svg>
<span id="t67" class="t" style="left:849.6px;top:120.20px;color:#c4c4c4;font-size:8.6px;letter-spacing:-0.075px;">Position</span>
<span id="t68" class="t" style="left:1032px;top:120.20px;color:#c4c4c4;font-size:8.3px;">X</span>
<div style="left:1042px;top:120.2px;width:76px;height:11.8px;background:#2a2a2a;border-radius:2px;box-shadow:inset 0 0 0 0.7px #1e1e1e;"></div>
<span id="t69" class="t" style="left:1044.2px;top:120.20px;color:#d2d2d2;font-size:8.6px;">0</span>
<span id="t70" class="t" style="left:1122px;top:120.20px;color:#c4c4c4;font-size:8.3px;">Y</span>
<div style="left:1131.4px;top:120.2px;width:76.2px;height:11.8px;background:#2a2a2a;border-radius:2px;box-shadow:inset 0 0 0 0.7px #1e1e1e;"></div>
<span id="t71" class="t" style="left:1133.6000000000001px;top:120.20px;color:#d2d2d2;font-size:8.6px;">0</span>
<span id="t72" class="t" style="left:1211.2px;top:120.20px;color:#c4c4c4;font-size:8.3px;">Z</span>
<div style="left:1221px;top:120.2px;width:75.6px;height:11.8px;background:#2a2a2a;border-radius:2px;box-shadow:inset 0 0 0 0.7px #1e1e1e;"></div>
<span id="t73" class="t" style="left:1223.2px;top:120.20px;color:#d2d2d2;font-size:8.6px;">0</span>
<span id="t74" class="t" style="left:849.6px;top:133.80px;color:#c4c4c4;font-size:8.6px;letter-spacing:-0.002px;">Rotation</span>
<span id="t75" class="t" style="left:1032px;top:133.80px;color:#c4c4c4;font-size:8.3px;">X</span>
<div style="left:1042px;top:133.8px;width:76px;height:11.8px;background:#2a2a2a;border-radius:2px;box-shadow:inset 0 0 0 0.7px #1e1e1e;"></div>
<span id="t76" class="t" style="left:1044.2px;top:133.80px;color:#d2d2d2;font-size:8.6px;">0</span>
<span id="t77" class="t" style="left:1122px;top:133.80px;color:#c4c4c4;font-size:8.3px;">Y</span>
<div style="left:1131.4px;top:133.8px;width:76.2px;height:11.8px;background:#2a2a2a;border-radius:2px;box-shadow:inset 0 0 0 0.7px #1e1e1e;"></div>
<span id="t78" class="t" style="left:1133.6000000000001px;top:133.80px;color:#d2d2d2;font-size:8.6px;">0</span>
<span id="t79" class="t" style="left:1211.2px;top:133.80px;color:#c4c4c4;font-size:8.3px;">Z</span>
<div style="left:1221px;top:133.8px;width:75.6px;height:11.8px;background:#2a2a2a;border-radius:2px;box-shadow:inset 0 0 0 0.7px #1e1e1e;"></div>
<span id="t80" class="t" style="left:1223.2px;top:133.80px;color:#d2d2d2;font-size:8.6px;">0</span>
<span id="t81" class="t" style="left:849.6px;top:147.40px;color:#c4c4c4;font-size:8.6px;letter-spacing:-0.120px;">Scale</span>
<span id="t82" class="t" style="left:1032px;top:147.40px;color:#c4c4c4;font-size:8.3px;">X</span>
<div style="left:1042px;top:147.4px;width:76px;height:11.8px;background:#2a2a2a;border-radius:2px;box-shadow:inset 0 0 0 0.7px #1e1e1e;"></div>
<span id="t83" class="t" style="left:1044.2px;top:147.40px;color:#d2d2d2;font-size:8.6px;">1</span>
<span id="t84" class="t" style="left:1122px;top:147.40px;color:#c4c4c4;font-size:8.3px;">Y</span>
<div style="left:1131.4px;top:147.4px;width:76.2px;height:11.8px;background:#2a2a2a;border-radius:2px;box-shadow:inset 0 0 0 0.7px #1e1e1e;"></div>
<span id="t85" class="t" style="left:1133.6000000000001px;top:147.40px;color:#d2d2d2;font-size:8.6px;">1</span>
<span id="t86" class="t" style="left:1211.2px;top:147.40px;color:#c4c4c4;font-size:8.3px;">Z</span>
<div style="left:1221px;top:147.4px;width:75.6px;height:11.8px;background:#2a2a2a;border-radius:2px;box-shadow:inset 0 0 0 0.7px #1e1e1e;"></div>
<span id="t87" class="t" style="left:1223.2px;top:147.40px;color:#d2d2d2;font-size:8.6px;">1</span>
<svg style="left:1017px;top:149.6px;" width="9.4" height="7.4" viewBox="0 0 9.4 7.4"><path d="M3.8 1.6 H2.8 A2.1 2.1 0 0 0 2.8 5.8 H3.8 M5.6 1.6 H6.6 A2.1 2.1 0 0 1 6.6 5.8 H5.6 M2.6 3.7 H6.8" fill="none" stroke="#b0b0b0" stroke-width="1"/><path d="M1.2 0.4 L8.2 7" stroke="#b0b0b0" stroke-width="0.9"/></svg>
<div style="left:837.4px;top:165.8px;width:462.6px;height:0.9px;background:#1a1a1a;"></div>
<div style="left:837.4px;top:166.70000000000002px;width:462.6px;height:13.2px;background:#3e3e3e;"></div>
<svg style="left:842px;top:171.20000000000002px;" width="5.4" height="5.4" viewBox="0 0 5.4 5.4"><path d="M0 0.5 H5.4 L2.7 4.9 Z" fill="#7c7c7c"/></svg>
<svg style="left:851.8px;top:168.20000000000002px;" width="8.5" height="10" viewBox="0 0 12.5 16"><g opacity="1"><path d="M1 0.5 H8.5 L11.5 3.5 V15.5 H1 Z" fill="#e6e6e6"/><path d="M4.3 5 L3.7 12 M7.6 5 L7 12 M2.6 7.2 H9.6 M2.3 9.8 H9.3" stroke="#3c8c50" stroke-width="1.3" fill="none"/></g></svg>
<div style="left:864.4px;top:168.70000000000002px;width:9.4px;height:9.4px;background:#262626;border-radius:1.5px;box-shadow:inset 0 0 0 0.7px #181818;"></div>
<svg style="left:865.8px;top:170.50000000000003px;" width="6.6000000000000005" height="6.0" viewBox="0 0 6.6 5.6"><path d="M0.6 3 L2.4 4.8 L6 0.8" fill="none" stroke="#e6e6e6" stroke-width="1.2"/></svg>
<span id="t88" class="t" style="left:877.8px;top:167.40px;color:#e0e0e0;font-size:8.3px;font-weight:bold;letter-spacing:0.005px;">Move Asynchronous Manipulator (Script)</span>
<svg style="left:1259.8999999999999px;top:169.70000000000002px;" width="7.4" height="7.4" viewBox="0 0 16 16"><circle cx="8" cy="8" r="8" fill="#c4c4c4"/><path d="M5.6 6.2 C5.6 3.2 10.6 3.2 10.6 6.2 C10.6 8 8 8 8 10" fill="none" stroke="#3e3e3e" stroke-width="2"/><circle cx="8" cy="12.6" r="1.2" fill="#3e3e3e"/></svg>
<svg style="left:1273.4px;top:169.4px;" width="8" height="8" viewBox="0 0 16 16"><path d="M1 4.5 H15 M1 11.5 H15" stroke="#c4c4c4" stroke-width="1.8"/><rect x="8.5" y="1.5" width="3" height="6" fill="#c4c4c4"/><rect x="3.5" y="8.5" width="3" height="6" fill="#c4c4c4"/></svg>
<svg style="left:1289.8px;top:169.9px;" width="2" height="7" viewBox="0 0 2 7"><circle cx="1" cy="1" r="0.85" fill="#bcbcbc"/><circle cx="1" cy="3.5" r="0.85" fill="#bcbcbc"/><circle cx="1" cy="6" r="0.85" fill="#bcbcbc"/></svg>
<span id="t89" class="t" style="left:849.6px;top:182.60px;color:#7a7a7a;font-size:8.6px;letter-spacing:0.067px;">Script</span>
<div style="left:1032px;top:182.7px;width:263px;height:11.6px;background:#323232;border-radius:2px;box-shadow:inset 0 0 0 0.7px #2c2c2c;"></div>
<svg style="left:1034.4px;top:185.0px;" width="6.2" height="7.4" viewBox="0 0 12 15"><g opacity="0.5"><path d="M0.5 0 H8 L11.5 3.5 V15 H0.5 Z" fill="#dcdcdc"/><path d="M4 4.5 L3.4 11.5 M7.6 4.5 L7 11.5 M2.2 6.8 H9.6 M1.9 9.4 H9.3" stroke="#4a4a4a" stroke-width="1.5" fill="none"/></g></svg>
<span id="t90" class="t" style="left:1043px;top:182.60px;color:#7a7a7a;font-size:8.6px;letter-spacing:0.037px;">MoveAsynchronousManipulator</span>
<svg style="left:1285.5px;top:184.6px;" width="8" height="8" viewBox="0 0 16 16"><circle cx="8" cy="8" r="6.3" fill="none" stroke="#686868" stroke-width="1.6"/><circle cx="8" cy="8" r="2.2" fill="#686868"/></svg>
<span id="t91" class="t" style="left:849.6px;top:196.40px;color:#c4c4c4;font-size:8.6px;letter-spacing:0.018px;">Pivot Point Manipulator</span>
<div style="left:1032px;top:196.5px;width:263px;height:11.6px;background:#2a2a2a;border-radius:2px;box-shadow:inset 0 0 0 0.7px #1e1e1e;"></div>
<div style="left:1284.4px;top:197.20000000000002px;width:9.9px;height:10.2px;background:#373737;border-radius:0 2px 2px 0;"></div>
<svg style="left:1034.4px;top:198.8px;" width="6.2" height="7.4" viewBox="0 0 12 15"><g opacity="1"><path d="M0.5 0 H8 L11.5 3.5 V15 H0.5 Z" fill="#dcdcdc"/><path d="M4 4.5 L3.4 11.5 M7.6 4.5 L7 11.5 M2.2 6.8 H9.6 M1.9 9.4 H9.3" stroke="#4a4a4a" stroke-width="1.5" fill="none"/></g></svg>
<span id="t92" class="t" style="left:1043px;top:196.40px;color:#d2d2d2;font-size:8.6px;letter-spacing:0.037px;">Sphere (Object Manipulator)</span>
<svg style="left:1285.5px;top:198.4px;" width="8" height="8" viewBox="0 0 16 16"><circle cx="8" cy="8" r="6.3" fill="none" stroke="#c4c4c4" stroke-width="1.6"/><circle cx="8" cy="8" r="2.2" fill="#c4c4c4"/></svg>
<div style="left:837.4px;top:213.8px;width:462.6px;height:0.9px;background:#1a1a1a;"></div>
<div style="left:837.4px;top:214.70000000000002px;width:462.6px;height:13.2px;background:#3e3e3e;"></div>
<svg style="left:842px;top:219.20000000000002px;" width="5.4" height="5.4" viewBox="0 0 5.4 5.4"><path d="M0 0.5 H5.4 L2.7 4.9 Z" fill="#7c7c7c"/></svg>
<svg style="left:851.8px;top:216.20000000000002px;" width="8.5" height="10" viewBox="0 0 12.5 16"><g opacity="1"><path d="M1 0.5 H8.5 L11.5 3.5 V15.5 H1 Z" fill="#e6e6e6"/><path d="M4.3 5 L3.7 12 M7.6 5 L7 12 M2.6 7.2 H9.6 M2.3 9.8 H9.3" stroke="#3c8c50" stroke-width="1.3" fill="none"/></g></svg>
<span id="t93" class="t" style="left:877.8px;top:215.40px;color:#e0e0e0;font-size:8.3px;font-weight:bold;letter-spacing:-0.012px;">Move Asynchronous Editor (Script)</span>
<svg style="left:1259.8999999999999px;top:217.70000000000002px;" width="7.4" height="7.4" viewBox="0 0 16 16"><circle cx="8" cy="8" r="8" fill="#c4c4c4"/><path d="M5.6 6.2 C5.6 3.2 10.6 3.2 10.6 6.2 C10.6 8 8 8 8 10" fill="none" stroke="#3e3e3e" stroke-width="2"/><circle cx="8" cy="12.6" r="1.2" fill="#3e3e3e"/></svg>
<svg style="left:1273.4px;top:217.4px;" width="8" height="8" viewBox="0 0 16 16"><path d="M1 4.5 H15 M1 11.5 H15" stroke="#c4c4c4" stroke-width="1.8"/><rect x="8.5" y="1.5" width="3" height="6" fill="#c4c4c4"/><rect x="3.5" y="8.5" width="3" height="6" fill="#c4c4c4"/></svg>
<svg style="left:1289.8px;top:217.9px;" width="2" height="7" viewBox="0 0 2 7"><circle cx="1" cy="1" r="0.85" fill="#bcbcbc"/><circle cx="1" cy="3.5" r="0.85" fill="#bcbcbc"/><circle cx="1" cy="6" r="0.85" fill="#bcbcbc"/></svg>
<span id="t94" class="t" style="left:849.6px;top:230.60px;color:#7a7a7a;font-size:8.6px;letter-spacing:0.067px;">Script</span>
<div style="left:1032px;top:230.7px;width:263px;height:11.6px;background:#323232;border-radius:2px;box-shadow:inset 0 0 0 0.7px #2c2c2c;"></div>
<svg style="left:1034.4px;top:233.0px;" width="6.2" height="7.4" viewBox="0 0 12 15"><g opacity="0.5"><path d="M0.5 0 H8 L11.5 3.5 V15 H0.5 Z" fill="#dcdcdc"/><path d="M4 4.5 L3.4 11.5 M7.6 4.5 L7 11.5 M2.2 6.8 H9.6 M1.9 9.4 H9.3" stroke="#4a4a4a" stroke-width="1.5" fill="none"/></g></svg>
<span id="t95" class="t" style="left:1043px;top:230.60px;color:#7a7a7a;font-size:8.6px;letter-spacing:0.045px;">MoveAsynchronousEditor</span>
<svg style="left:1285.5px;top:232.6px;" width="8" height="8" viewBox="0 0 16 16"><circle cx="8" cy="8" r="6.3" fill="none" stroke="#686868" stroke-width="1.6"/><circle cx="8" cy="8" r="2.2" fill="#686868"/></svg>
<span id="t96" class="t" style="left:849.6px;top:244.00px;color:#c4c4c4;font-size:8.6px;letter-spacing:0.034px;">Move Asynchronous Manipulator</span>
<div style="left:1032px;top:244.1px;width:263px;height:11.6px;background:#2a2a2a;border-radius:2px;box-shadow:inset 0 0 0 0.7px #1e1e1e;"></div>
<div style="left:1284.4px;top:244.8px;width:9.9px;height:10.2px;background:#373737;border-radius:0 2px 2px 0;"></div>
<svg style="left:1034.4px;top:246.4px;" width="6.2" height="7.4" viewBox="0 0 12 15"><g opacity="1"><path d="M0.5 0 H8 L11.5 3.5 V15 H0.5 Z" fill="#dcdcdc"/><path d="M4 4.5 L3.4 11.5 M7.6 4.5 L7 11.5 M2.2 6.8 H9.6 M1.9 9.4 H9.3" stroke="#4a4a4a" stroke-width="1.5" fill="none"/></g></svg>
<span id="t97" class="t" style="left:1043px;top:244.00px;color:#d2d2d2;font-size:8.6px;letter-spacing:0.037px;">MoveAsynchronousManipulator</span>
<svg style="left:1285.5px;top:246px;" width="8" height="8" viewBox="0 0 16 16"><circle cx="8" cy="8" r="6.3" fill="none" stroke="#c4c4c4" stroke-width="1.6"/><circle cx="8" cy="8" r="2.2" fill="#c4c4c4"/></svg>
<span id="t98" class="t" style="left:1168px;top:244.00px;color:#d2d2d2;font-size:8.6px;letter-spacing:0.032px;width:116px;overflow:hidden;">(Move Asynchronous Manipulator)</span>
<svg style="left:848.6px;top:261.6px;" width="5" height="5" viewBox="0 0 5 5"><path d="M0 0.5 H5 L2.5 4.5 Z" fill="#7c7c7c"/></svg>
<span id="t99" class="t" style="left:858px;top:257.60px;color:#c4c4c4;font-size:8.6px;letter-spacing:0.114px;">Target Objects</span>
<div style="left:1262px;top:257.8px;width:33px;height:11.6px;background:#2a2a2a;border-radius:2px;box-shadow:inset 0 0 0 0.7px #1e1e1e;"></div>
<span id="t100" class="t" style="left:1264.4px;top:257.60px;color:#d2d2d2;font-size:8.6px;">3</span>
<div style="left:848px;top:271px;width:447px;height:47px;background:#444444;border-radius:2px;box-shadow:0 0 0 0.6px #2c2c2c;"></div>
<div style="left:848px;top:302px;width:447px;height:15.4px;background:#494949;border-radius:0 0 2px 2px;"></div>
<div style="left:848px;top:271px;width:447px;height:15.6px;background:#494949;border-radius:2px 2px 0 0;"></div>
<svg style="left:851px;top:274.90000000000003px;" width="6" height="4" viewBox="0 0 6 4"><path d="M0 0.6 H6 M0 2.8 H6" stroke="#5a5a5a" stroke-width="0.9"/></svg>
<span id="t101" class="t" style="left:869.6px;top:273.30px;color:#c4c4c4;font-size:8.6px;letter-spacing:-0.111px;">Element 0</span>
<div style="left:1032px;top:273.40000000000003px;width:259.4000000000001px;height:11.6px;background:#2a2a2a;border-radius:2px;box-shadow:inset 0 0 0 0.7px #1e1e1e;"></div>
<div style="left:1280.8000000000002px;top:274.1px;width:9.9px;height:10.2px;background:#373737;border-radius:0 2px 2px 0;"></div>
<svg style="left:1033.2px;top:274.9px;" width="9.2" height="9.2" viewBox="0 0 16 16"><path d="M8 8.6 V3" stroke="#bfe070" stroke-width="2.2" stroke-linecap="round" fill="none"/><path d="M8 8.8 L3.4 12.2" stroke="#6fb0ea" stroke-width="2.2" stroke-linecap="round"/><path d="M8 8.8 L12.6 12.2" stroke="#e87860" stroke-width="2.2" stroke-linecap="round"/></svg>
<span id="t102" class="t" style="left:1043px;top:273.30px;color:#d2d2d2;font-size:8.6px;letter-spacing:0.025px;">Cube (Transform)</span>
<svg style="left:1281.9px;top:275.3px;" width="8" height="8" viewBox="0 0 16 16"><circle cx="8" cy="8" r="6.3" fill="none" stroke="#c4c4c4" stroke-width="1.6"/><circle cx="8" cy="8" r="2.2" fill="#c4c4c4"/></svg>
<svg style="left:851px;top:289.90000000000003px;" width="6" height="4" viewBox="0 0 6 4"><path d="M0 0.6 H6 M0 2.8 H6" stroke="#5a5a5a" stroke-width="0.9"/></svg>
<span id="t103" class="t" style="left:869.6px;top:288.30px;color:#c4c4c4;font-size:8.6px;letter-spacing:-0.111px;">Element 1</span>
<div style="left:1032px;top:288.40000000000003px;width:259.4000000000001px;height:11.6px;background:#2a2a2a;border-radius:2px;box-shadow:inset 0 0 0 0.7px #1e1e1e;"></div>
<div style="left:1280.8000000000002px;top:289.1px;width:9.9px;height:10.2px;background:#373737;border-radius:0 2px 2px 0;"></div>
<svg style="left:1033.2px;top:289.9px;" width="9.2" height="9.2" viewBox="0 0 16 16"><path d="M8 8.6 V3" stroke="#bfe070" stroke-width="2.2" stroke-linecap="round" fill="none"/><path d="M8 8.8 L3.4 12.2" stroke="#6fb0ea" stroke-width="2.2" stroke-linecap="round"/><path d="M8 8.8 L12.6 12.2" stroke="#e87860" stroke-width="2.2" stroke-linecap="round"/></svg>
<span id="t104" class="t" style="left:1043px;top:288.30px;color:#d2d2d2;font-size:8.6px;letter-spacing:0.027px;">Capsule (Transform)</span>
<svg style="left:1281.9px;top:290.3px;" width="8" height="8" viewBox="0 0 16 16"><circle cx="8" cy="8" r="6.3" fill="none" stroke="#c4c4c4" stroke-width="1.6"/><circle cx="8" cy="8" r="2.2" fill="#c4c4c4"/></svg>
<svg style="left:851px;top:304.90000000000003px;" width="6" height="4" viewBox="0 0 6 4"><path d="M0 0.6 H6 M0 2.8 H6" stroke="#5a5a5a" stroke-width="0.9"/></svg>
<span id="t105" class="t" style="left:869.6px;top:303.30px;color:#c4c4c4;font-size:8.6px;letter-spacing:-0.111px;">Element 2</span>
<div style="left:1032px;top:303.40000000000003px;width:259.4000000000001px;height:11.6px;background:#2a2a2a;border-radius:2px;box-shadow:inset 0 0 0 0.7px #1e1e1e;"></div>
<div style="left:1280.8000000000002px;top:304.1px;width:9.9px;height:10.2px;background:#373737;border-radius:0 2px 2px 0;"></div>
<svg style="left:1033.2px;top:304.9px;" width="9.2" height="9.2" viewBox="0 0 16 16"><path d="M8 8.6 V3" stroke="#bfe070" stroke-width="2.2" stroke-linecap="round" fill="none"/><path d="M8 8.8 L3.4 12.2" stroke="#6fb0ea" stroke-width="2.2" stroke-linecap="round"/><path d="M8 8.8 L12.6 12.2" stroke="#e87860" stroke-width="2.2" stroke-linecap="round"/></svg>
<span id="t106" class="t" style="left:1043px;top:303.30px;color:#d2d2d2;font-size:8.6px;letter-spacing:0.077px;">Cylinder (Transform)</span>
<svg style="left:1281.9px;top:305.3px;" width="8" height="8" viewBox="0 0 16 16"><circle cx="8" cy="8" r="6.3" fill="none" stroke="#c4c4c4" stroke-width="1.6"/><circle cx="8" cy="8" r="2.2" fill="#c4c4c4"/></svg>
<div style="left:1250px;top:317.6px;width:36px;height:15.4px;background:#444444;border-radius:0 0 2.5px 2.5px;box-shadow:inset 0 -0.8px 0 0.1px #2a2a2a;"></div>
<svg style="left:1257px;top:322.6px;" width="7" height="7" viewBox="0 0 7 7"><path d="M3.5 0.4 V6.6 M0.4 3.5 H6.6" stroke="#e0e0e0" stroke-width="1.5"/></svg>
<svg style="left:1273px;top:325.2px;" width="5" height="2" viewBox="0 0 5 2"><path d="M0.2 1 H4.4" stroke="#e0e0e0" stroke-width="1.5"/></svg>
<div style="left:991px;top:345px;width:154.5px;height:14.5px;background:#585858;border-radius:2px;"></div>
<span id="t107" class="t" style="left:1038px;top:346.20px;color:#e4e4e4;font-size:8.6px;letter-spacing:-0.085px;">Add Component</span>
<div style="left:834.8px;top:163.5px;width:456.8px;height:168.4px;border:4.2px solid #d22b35;border-left-width:4.6px;"></div>
<div style="left:1298.4px;top:165px;width:1.6px;height:174px;background:#dc2029;"></div>
<div style="left:0px;top:684px;width:1300px;height:15px;background:#191919;"></div>
<div style="left:1229px;top:685px;width:0.8px;height:14px;background:#242424;"></div>
<div style="left:1246.4px;top:685px;width:0.8px;height:14px;background:#242424;"></div>
<div style="left:1264px;top:685px;width:0.8px;height:14px;background:#242424;"></div>
<div style="left:1282px;top:685px;width:0.8px;height:14px;background:#242424;"></div>
<svg style="left:1214.4px;top:687.2px;" width="12" height="9" viewBox="0 0 20 13"><path d="M10 7 C7.6 2 6 1.4 4 1.4 C1 1.4 1 11.6 4 11.6 C6 11.6 7.6 11 10 7 C12.4 2.6 14 1.4 16 1.4 C19 1.4 19 11.6 16 11.6 C14 11.6 12.4 11 10 7" fill="none" stroke="#d0d0d0" stroke-width="2.4"/><circle cx="17" cy="2.6" r="2.6" fill="#e8a070"/></svg>
<svg style="left:1232px;top:686.8px;" width="10" height="10.6" viewBox="0 0 10 10.6"><path d="M5 0.4 L6.2 3 L8.8 1.4 L8 4.4 L10 5.4 L7.8 6.6 L8.6 10 L6 8 L5 10.4 L3.8 8 L1 9.6 L2.4 6.4 L0 5.2 L2.4 4.2 L1.4 1.4 L4 3 Z" fill="#f0c030"/><rect x="6.4" y="5" width="1.6" height="3.4" fill="#191919"/><rect x="6.4" y="9" width="1.6" height="1.4" fill="#e8e8e8"/></svg>
<svg style="left:1250px;top:687.4px;" width="10" height="9.6" viewBox="0 0 10 9.6"><ellipse cx="4.6" cy="1.8" rx="4" ry="1.5" fill="#c8c8c8"/><path d="M0.6 3 V7.4 A4 1.5 0 0 0 8.6 7.4 V3 A4 1.5 0 0 1 0.6 3 Z" fill="#c8c8c8"/><path d="M0.6 5 A4 1.5 0 0 0 8.6 5" fill="none" stroke="#191919" stroke-width="0.7"/><path d="M0.6 1 L9.6 9.2" stroke="#191919" stroke-width="1.6"/><path d="M1 0.4 L10 8.6" stroke="#c8c8c8" stroke-width="0.8"/></svg>
<svg style="left:1268px;top:687px;" width="10.4" height="10" viewBox="0 0 10.4 10"><circle cx="5" cy="5" r="4.2" fill="none" stroke="#c0c0c0" stroke-width="1.1"/><ellipse cx="5" cy="5" rx="2" ry="4.2" fill="none" stroke="#c0c0c0" stroke-width="0.8"/><path d="M0.8 5 H9.2" stroke="#c0c0c0" stroke-width="0.8"/><path d="M0.6 0.8 L9.8 9.4" stroke="#191919" stroke-width="1.8"/><path d="M1 0.4 L10.2 9" stroke="#c0c0c0" stroke-width="0.9"/></svg>
<svg style="left:1285.4px;top:686.6px;" width="10.6" height="10.6" viewBox="0 0 10.6 10.6"><circle cx="5.3" cy="5.3" r="4.6" fill="none" stroke="#c4c4c4" stroke-width="1"/><path d="M3 5.4 L4.8 7 L7.8 3.8" fill="none" stroke="#c4c4c4" stroke-width="1.4"/></svg>
</div></body></html>
